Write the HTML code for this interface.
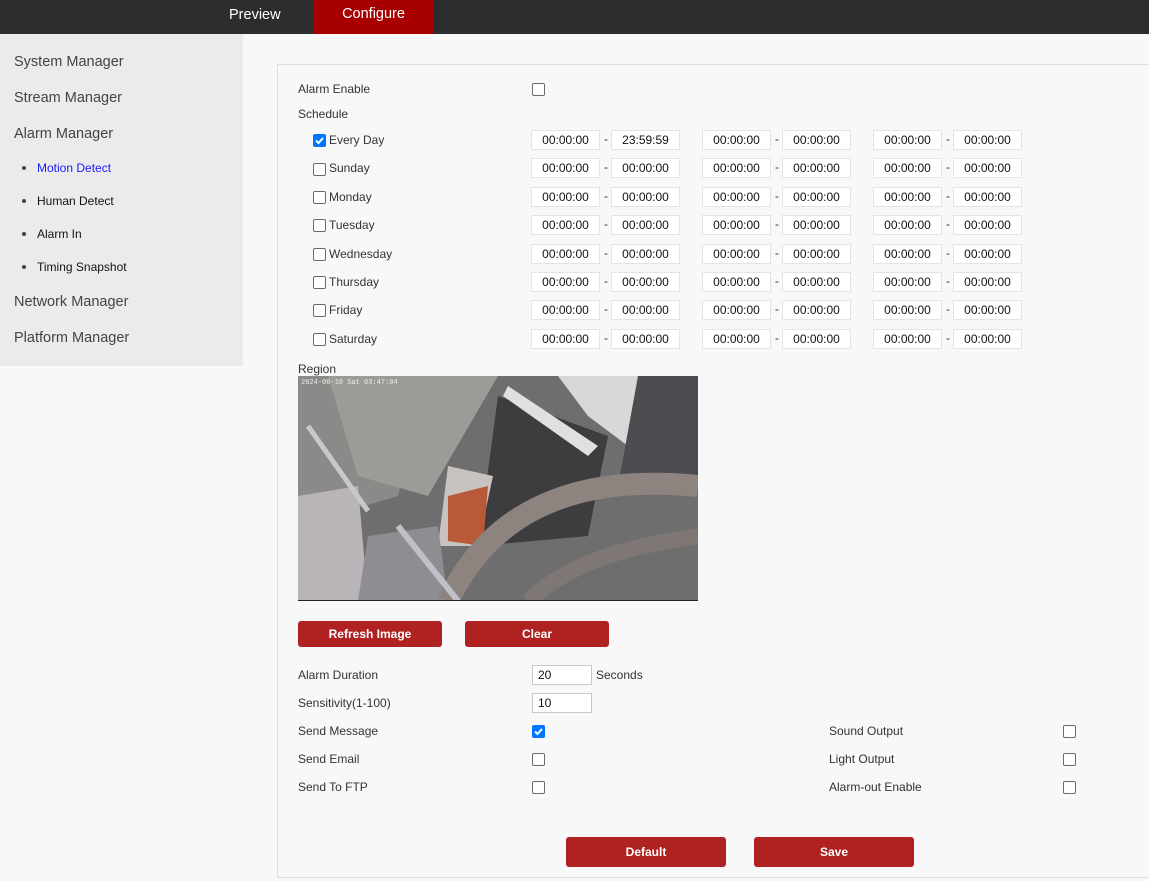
<!DOCTYPE html>
<html><head><meta charset="utf-8"><style>
*{margin:0;padding:0;box-sizing:border-box}
body{width:1149px;height:881px;background:#f8f8f8;font-family:"Liberation Sans",Arial,sans-serif;color:#333;position:relative;overflow:hidden}
.a{position:absolute;white-space:nowrap}
.top{left:0;top:0;width:1149px;height:34px;background:#2d2d2d}
.side{left:0;top:34px;width:243px;height:332px;background:#ebebeb}
.sm{font-size:14.5px;color:#444;left:14px}
.sub{font-size:12px;color:#111;left:37px}
.dot{width:4px;height:4px;border-radius:50%;background:#444;left:22px}
.panel{left:277px;top:64px;width:900px;height:814px;border:1px solid #ddd;background:#f8f8f8}
.t{font-size:12px;color:#333}
.in{height:20px;width:69px;background:#fff;border:1px solid #e4e4e4;font-size:12px;color:#111;text-align:center;line-height:18px}
.cb{width:13px;height:13px;border:1px solid #6a6a6a;border-radius:2px;background:#fff}
.ck{width:13px;height:13px;border-radius:2px;background:#0075ff}
.btn{background:#b02222;color:#fff;font-size:12px;font-weight:bold;text-align:center;border-radius:3px}
.ni{height:20px;width:60px;background:#fff;border:1px solid #c8c8c8;font-size:12px;color:#111;line-height:18px;padding-left:5px}
.r{position:absolute;left:0;width:500px;height:20px}.r .in{position:absolute;top:0}.r .d{position:absolute;top:2px;font-size:12px;color:#333}
</style></head><body>
<div class="a top"></div>
<div class="a" style="left:229px;top:7px;font-size:14.5px;color:#fff">Preview</div>
<div class="a" style="left:314px;top:0;width:119px;height:34px;background:#a80000;color:#fff;font-size:14.5px;text-align:center;line-height:28px">Configure</div>
<div class="a side"></div>
<div class="a sm" style="top:54px">System Manager</div>
<div class="a sm" style="top:90px">Stream Manager</div>
<div class="a sm" style="top:126px">Alarm Manager</div>
<div class="a dot" style="top:166px"></div><div class="a sub" style="top:161px;color:#1a1aff">Motion Detect</div>
<div class="a dot" style="top:199px"></div><div class="a sub" style="top:194px">Human Detect</div>
<div class="a dot" style="top:232px"></div><div class="a sub" style="top:227px">Alarm In</div>
<div class="a dot" style="top:265px"></div><div class="a sub" style="top:260px">Timing Snapshot</div>
<div class="a sm" style="top:294px">Network Manager</div>
<div class="a sm" style="top:330px">Platform Manager</div>

<div class="a panel"></div>
<div class="a t" style="left:298px;top:82px">Alarm Enable</div>
<div class="a cb" style="left:532px;top:83px"></div>
<div class="a t" style="left:298px;top:107px">Schedule</div>

<div class="a ck" style="left:313px;top:134px"><svg width="13" height="13"><path d="M3 6.5l2.5 2.5 4.5-5" stroke="#fff" stroke-width="2" fill="none"/></svg></div>
<div class="a t" style="left:329px;top:133px">Every Day</div>
<div class="a cb" style="left:313px;top:163px"></div><div class="a t" style="left:329px;top:161px">Sunday</div>
<div class="a cb" style="left:313px;top:191px"></div><div class="a t" style="left:329px;top:190px">Monday</div>
<div class="a cb" style="left:313px;top:219px"></div><div class="a t" style="left:329px;top:218px">Tuesday</div>
<div class="a cb" style="left:313px;top:248px"></div><div class="a t" style="left:329px;top:247px">Wednesday</div>
<div class="a cb" style="left:313px;top:276px"></div><div class="a t" style="left:329px;top:275px">Thursday</div>
<div class="a cb" style="left:313px;top:304px"></div><div class="a t" style="left:329px;top:303px">Friday</div>
<div class="a cb" style="left:313px;top:333px"></div><div class="a t" style="left:329px;top:332px">Saturday</div>

<div class="a" style="left:531px;top:130px">
<div class="r" style="top:0"><div class="in" style="left:0">00:00:00</div><div class="d" style="left:73px">-</div><div class="in" style="left:80px">23:59:59</div><div class="in" style="left:171px">00:00:00</div><div class="d" style="left:244px">-</div><div class="in" style="left:251px">00:00:00</div><div class="in" style="left:342px">00:00:00</div><div class="d" style="left:415px">-</div><div class="in" style="left:422px">00:00:00</div></div>
<div class="r" style="top:28px"><div class="in" style="left:0">00:00:00</div><div class="d" style="left:73px">-</div><div class="in" style="left:80px">00:00:00</div><div class="in" style="left:171px">00:00:00</div><div class="d" style="left:244px">-</div><div class="in" style="left:251px">00:00:00</div><div class="in" style="left:342px">00:00:00</div><div class="d" style="left:415px">-</div><div class="in" style="left:422px">00:00:00</div></div>
<div class="r" style="top:57px"><div class="in" style="left:0">00:00:00</div><div class="d" style="left:73px">-</div><div class="in" style="left:80px">00:00:00</div><div class="in" style="left:171px">00:00:00</div><div class="d" style="left:244px">-</div><div class="in" style="left:251px">00:00:00</div><div class="in" style="left:342px">00:00:00</div><div class="d" style="left:415px">-</div><div class="in" style="left:422px">00:00:00</div></div>
<div class="r" style="top:85px"><div class="in" style="left:0">00:00:00</div><div class="d" style="left:73px">-</div><div class="in" style="left:80px">00:00:00</div><div class="in" style="left:171px">00:00:00</div><div class="d" style="left:244px">-</div><div class="in" style="left:251px">00:00:00</div><div class="in" style="left:342px">00:00:00</div><div class="d" style="left:415px">-</div><div class="in" style="left:422px">00:00:00</div></div>
<div class="r" style="top:114px"><div class="in" style="left:0">00:00:00</div><div class="d" style="left:73px">-</div><div class="in" style="left:80px">00:00:00</div><div class="in" style="left:171px">00:00:00</div><div class="d" style="left:244px">-</div><div class="in" style="left:251px">00:00:00</div><div class="in" style="left:342px">00:00:00</div><div class="d" style="left:415px">-</div><div class="in" style="left:422px">00:00:00</div></div>
<div class="r" style="top:142px"><div class="in" style="left:0">00:00:00</div><div class="d" style="left:73px">-</div><div class="in" style="left:80px">00:00:00</div><div class="in" style="left:171px">00:00:00</div><div class="d" style="left:244px">-</div><div class="in" style="left:251px">00:00:00</div><div class="in" style="left:342px">00:00:00</div><div class="d" style="left:415px">-</div><div class="in" style="left:422px">00:00:00</div></div>
<div class="r" style="top:170px"><div class="in" style="left:0">00:00:00</div><div class="d" style="left:73px">-</div><div class="in" style="left:80px">00:00:00</div><div class="in" style="left:171px">00:00:00</div><div class="d" style="left:244px">-</div><div class="in" style="left:251px">00:00:00</div><div class="in" style="left:342px">00:00:00</div><div class="d" style="left:415px">-</div><div class="in" style="left:422px">00:00:00</div></div>
<div class="r" style="top:199px"><div class="in" style="left:0">00:00:00</div><div class="d" style="left:73px">-</div><div class="in" style="left:80px">00:00:00</div><div class="in" style="left:171px">00:00:00</div><div class="d" style="left:244px">-</div><div class="in" style="left:251px">00:00:00</div><div class="in" style="left:342px">00:00:00</div><div class="d" style="left:415px">-</div><div class="in" style="left:422px">00:00:00</div></div>
</div>

<div class="a t" style="left:298px;top:362px">Region</div>
<svg class="a" style="left:298px;top:376px" width="400" height="225" viewBox="0 0 400 225">
<rect width="400" height="225" fill="#6e6e6e"/>
<polygon points="0,0 130,0 100,120 0,150" fill="#8a8a88"/>
<polygon points="30,0 200,0 130,120 60,100" fill="#9c9b97"/>
<polygon points="200,20 310,60 290,160 180,170" fill="#3d3d40"/>
<polygon points="150,90 195,100 180,170 140,170" fill="#c8c3be"/>
<polygon points="150,120 190,110 185,170 150,165" fill="#b85a3a"/>
<polygon points="260,0 340,0 330,70 290,40" fill="#d8d8d8"/>
<polygon points="0,120 60,110 70,225 0,225" fill="#b9b4b8"/>
<polygon points="210,10 300,70 290,80 205,20" fill="#e0e0e0"/>
<polygon points="340,0 400,0 400,110 320,110" fill="#4c4d50"/>
<polygon points="70,160 140,150 150,225 60,225" fill="#8d8d92"/>
<path d="M150 225 C200 120 300 100 400 110" stroke="#8d8480" stroke-width="22" fill="none"/>
<path d="M230 225 C280 180 340 170 400 160" stroke="#7e7774" stroke-width="16" fill="none"/>
<path d="M100 150 L160 225" stroke="#c0c0c8" stroke-width="6" fill="none"/>
<path d="M10 50 L70 135" stroke="#c8c8cc" stroke-width="5" fill="none"/>
<path d="M0 225 L400 225" stroke="#222" stroke-width="2"/>
<text x="3" y="8" font-size="7" fill="#eee" font-family="Liberation Mono">2024-08-10 Sat 03:47:04</text>
</svg>

<div class="a btn" style="left:298px;top:621px;width:144px;height:26px;line-height:26px">Refresh Image</div>
<div class="a btn" style="left:465px;top:621px;width:144px;height:26px;line-height:26px">Clear</div>

<div class="a t" style="left:298px;top:668px">Alarm Duration</div>
<div class="a ni" style="left:532px;top:665px">20</div>
<div class="a t" style="left:596px;top:668px">Seconds</div>
<div class="a t" style="left:298px;top:696px">Sensitivity(1-100)</div>
<div class="a ni" style="left:532px;top:693px">10</div>
<div class="a t" style="left:298px;top:724px">Send Message</div>
<div class="a ck" style="left:532px;top:725px"><svg width="13" height="13"><path d="M3 6.5l2.5 2.5 4.5-5" stroke="#fff" stroke-width="2" fill="none"/></svg></div>
<div class="a t" style="left:298px;top:752px">Send Email</div>
<div class="a cb" style="left:532px;top:753px"></div>
<div class="a t" style="left:298px;top:780px">Send To FTP</div>
<div class="a cb" style="left:532px;top:781px"></div>
<div class="a t" style="left:829px;top:724px">Sound Output</div>
<div class="a cb" style="left:1063px;top:725px"></div>
<div class="a t" style="left:829px;top:752px">Light Output</div>
<div class="a cb" style="left:1063px;top:753px"></div>
<div class="a t" style="left:829px;top:780px">Alarm-out Enable</div>
<div class="a cb" style="left:1063px;top:781px"></div>

<div class="a btn" style="left:566px;top:837px;width:160px;height:30px;line-height:30px">Default</div>
<div class="a btn" style="left:754px;top:837px;width:160px;height:30px;line-height:30px">Save</div>
</body></html>
